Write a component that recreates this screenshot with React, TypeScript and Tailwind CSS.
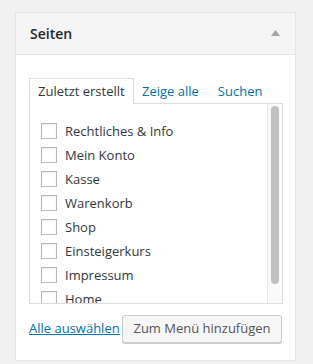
const pages = [
  'Rechtliches & Info',
  'Mein Konto',
  'Kasse',
  'Warenkorb',
  'Shop',
  'Einsteigerkurs',
  'Impressum',
  'Home',
];

const App = () => {
  return (
    <div className="w-[313px] h-[364px] bg-[#f1f1f1] pt-[12px] pl-[15px] overflow-hidden font-['Open_Sans',sans-serif]">
      <div className="w-[281px] border border-[#e5e5e5] bg-white">
        {/* header */}
        <div className="h-[42px] bg-[#f5f5f5] border-b border-[#e5e5e5] flex items-center justify-between pl-[14px] pr-[15px]">
          <h3 className="text-[14px] font-semibold text-[#23282d] leading-none">Seiten</h3>
          <svg width="9" height="6" viewBox="0 0 9 6" className="mt-[-1px]">
            <polygon points="4.5,0 9,6 0,6" fill="#a0a5aa" />
          </svg>
        </div>

        <div className="pt-[24px] pl-[13px] pr-[13px] pb-[17px]">
          {/* tabs */}
          <div className="flex items-end h-[25px] text-[13px]">
            <div className="h-[26px] w-[105px] border border-[#ddd] border-b-0 bg-white pl-[8px] pt-[3px] text-[#32373c] relative z-10">
              Zuletzt erstellt
            </div>
            <div className="pl-[8px] pt-[3px] h-[25px] text-[#0073aa]">Zeige alle</div>
            <div className="pl-[19px] pt-[3px] h-[25px] text-[#0073aa]">Suchen</div>
          </div>

          {/* list */}
          <div className="h-[201px] w-[254px] border border-[#ddd] flex overflow-hidden -mt-px">
            <div className="flex-1 pl-[11px] pt-[19px] flex flex-col gap-[8px] overflow-hidden">
              {pages.map((p) => (
                <label key={p} className="flex items-center h-[16px] text-[13px] text-[#32373c] shrink-0">
                  <span className="w-[16px] h-[16px] border border-[#b4b9be] bg-white shrink-0 shadow-[inset_0_1px_2px_rgba(0,0,0,0.07)]" />
                  <span className="ml-[8px] leading-none">{p}</span>
                </label>
              ))}
            </div>
            <div className="w-[15px] h-full bg-[#fafafa] border-l border-[#e8e8e8] pl-[3px] pt-[2px]">
              <div className="w-[8px] h-[178px] rounded-full bg-[#c1c1c1]" />
            </div>
          </div>

          {/* actions */}
          <div className="flex items-center justify-between mt-[11px]">
            <a href="#" className="text-[13px] text-[#0073aa] underline">Alle auswählen</a>
            <button className="h-[28px] w-[160px] border border-[#ccc] rounded-[3px] bg-[#f7f7f7] text-[13px] text-[#555] shadow-[0_1px_0_#ccc]">
              Zum Menü hinzufügen
            </button>
          </div>
        </div>
      </div>
    </div>
  );
};

export default App;
